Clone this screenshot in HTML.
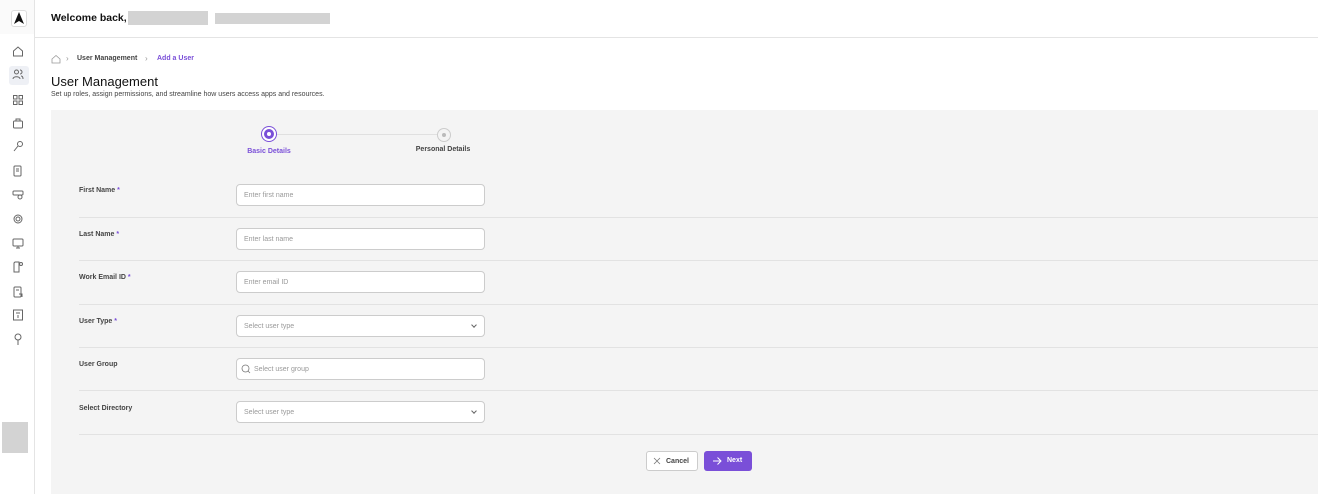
<!DOCTYPE html>
<html><head><meta charset="utf-8"><style>
*{box-sizing:border-box;margin:0;padding:0}
body{width:1318px;height:494px;overflow:hidden;background:#fff;font-family:"Liberation Sans",sans-serif;position:relative;color:#222}
.abs{position:absolute}
.sb{left:0;top:0;width:35px;height:494px;border-right:1px solid #e4e4e4;background:#fff}
.lbl{position:absolute;left:79px;font-size:7px;font-weight:bold;color:#444}
.lbl b{color:#7a4fd8}
.inp{position:absolute;left:236px;width:249px;height:22px;border:1px solid #ccc;border-radius:4px;background:#fff;font-size:7px;color:#999;padding-left:7px;padding-top:7px;line-height:8px}
.sep{position:absolute;left:79px;right:0;height:1px;background:#e2e2e2}
.chev{position:absolute;right:8px;top:7px;width:4px;height:4px;border-right:1px solid #666;border-bottom:1px solid #666;transform:rotate(45deg)}
</style></head><body>
<div class="abs sb">
 <div class="abs" style="left:0;top:0;width:34px;height:34px;background:#fafafa"></div>
 <div class="abs" style="left:11px;top:10px;width:16px;height:17px;background:#fff;border:1px solid #ddd;border-radius:3px"></div>
 <svg class="abs" style="left:14px;top:12px" width="10" height="12" viewBox="0 0 10 12"><path d="M5 0L10 12L5 9L0 12Z" fill="#111"/></svg>
 <div class="abs" style="left:9px;top:66px;width:20px;height:19px;background:#eef0f5;border-radius:3px"></div>
 <svg class="abs" style="left:12px;top:45px" width="12" height="310" viewBox="0 0 12 310" fill="none" stroke="#666" stroke-width="1">
  <path d="M1.5 6L6 2L10.5 6V11H1.5Z"/>
  <circle cx="4.5" cy="27" r="2"/><path d="M1 34c0-3 7-3 7 0M8 25a2 2 0 0 1 0 4M9 31c2 0 2 2 2 3"/>
  <rect x="1.5" y="50.5" width="3.5" height="3.5"/><rect x="7" y="50.5" width="3.5" height="3.5"/><rect x="1.5" y="56" width="3.5" height="3.5"/><rect x="7" y="56" width="3.5" height="3.5"/>
  <rect x="1.5" y="76" width="9" height="7" rx="1"/><path d="M4 76v-2h4v2"/>
  <circle cx="8" cy="99" r="2.5"/><path d="M6 101L2 106"/>
  <rect x="2" y="121" width="7" height="10" rx="1"/><path d="M4 124h3M4 126h3"/>
  <rect x="1" y="146" width="10" height="4" rx="1"/><circle cx="8" cy="152" r="2"/>
  <circle cx="6" cy="174" r="4"/><circle cx="6" cy="174" r="2"/>
  <rect x="1" y="194" width="10" height="7" rx="1"/><path d="M6 201v2M4 203h4"/>
  <path d="M3 217h4v10H2V218z"/><circle cx="9" cy="219" r="1.5"/>
  <rect x="2" y="242" width="7" height="10" rx="1"/><path d="M4 245h3M7 249h3v3"/>
  <rect x="1.5" y="265" width="9" height="10"/><path d="M4 268h4M6 270v3"/>
  <circle cx="6" cy="292" r="3"/><path d="M6 295v5"/>
 </svg>
 <div class="abs" style="left:2px;top:422px;width:26px;height:31px;background:#d3d3d3"></div>
</div>
<div class="abs" style="left:35px;top:37px;right:0;height:1px;background:#e4e4e4"></div>
<div class="abs" style="left:51px;top:12px;font-size:10.5px;font-weight:bold;color:#111">Welcome back,</div>
<div class="abs" style="left:128px;top:11px;width:80px;height:14px;background:#d3d3d3"></div>
<div class="abs" style="left:215px;top:13px;width:115px;height:11px;background:#d3d3d3"></div>
<svg class="abs" style="left:51px;top:54px" width="10" height="10" viewBox="0 0 10 10" fill="none" stroke="#999" stroke-width="0.8"><path d="M1 5L5 1.5L9 5V9H1Z"/></svg>
<div class="abs" style="left:66px;top:54px;font-size:8px;color:#999">›</div>
<div class="abs" style="left:77px;top:55px;font-size:7px;color:#444;font-weight:bold">User Management</div>
<div class="abs" style="left:145px;top:54px;font-size:8px;color:#999">›</div>
<div class="abs" style="left:157px;top:55px;font-size:7px;color:#7a4fd8;font-weight:bold">Add a User</div>
<div class="abs" style="left:51px;top:74px;font-size:13px;color:#111">User Management</div>
<div class="abs" style="left:51px;top:91px;font-size:7px;color:#444">Set up roles, assign permissions, and streamline how users access apps and resources.</div>
<div class="abs" style="left:51px;top:110px;right:0;bottom:0;background:#f4f4f4"></div>
<div class="abs" style="left:276px;top:134px;width:162px;height:1px;background:#e0e0e0"></div>
<div class="abs" style="left:262px;top:127px;width:14px;height:14px;border-radius:50%;background:#7a4fd8;border:2px solid #fff;box-shadow:0 0 0 1px #7a4fd8"></div>
<div class="abs" style="left:267px;top:132px;width:4px;height:4px;border-radius:50%;background:#fff"></div>
<div class="abs" style="left:437px;top:128px;width:14px;height:14px;border-radius:50%;border:1px solid #ccc;background:#f4f4f4"></div>
<div class="abs" style="left:442px;top:133px;width:4px;height:4px;border-radius:50%;background:#bbb"></div>
<div class="abs" style="left:229px;top:148px;width:80px;text-align:center;font-size:7px;color:#7a4fd8;font-weight:bold">Basic Details</div>
<div class="abs" style="left:403px;top:146px;width:80px;text-align:center;font-size:7px;color:#444;font-weight:bold">Personal Details</div>

<div class="lbl" style="top:187px">First Name <b>*</b></div>
<div class="inp" style="top:184px">Enter first name</div>
<div class="sep" style="top:217px"></div>
<div class="lbl" style="top:231px">Last Name <b>*</b></div>
<div class="inp" style="top:228px">Enter last name</div>
<div class="sep" style="top:260px"></div>
<div class="lbl" style="top:274px">Work Email ID <b>*</b></div>
<div class="inp" style="top:271px">Enter email ID</div>
<div class="sep" style="top:304px"></div>
<div class="lbl" style="top:318px">User Type <b>*</b></div>
<div class="inp" style="top:315px">Select user type<span class="chev"></span></div>
<div class="sep" style="top:347px"></div>
<div class="lbl" style="top:361px">User Group</div>
<div class="inp" style="top:358px;padding-left:17px">Select user group</div>
<svg class="abs" style="left:241px;top:364px" width="10" height="10" viewBox="0 0 10 10" fill="none" stroke="#777" stroke-width="0.8"><circle cx="4.5" cy="4.5" r="3.5"/><path d="M7 7L9 9"/></svg>
<div class="sep" style="top:390px"></div>
<div class="lbl" style="top:405px">Select Directory</div>
<div class="inp" style="top:401px">Select user type<span class="chev"></span></div>
<div class="sep" style="top:434px"></div>

<div class="abs" style="left:646px;top:451px;width:52px;height:20px;border:1px solid #ccc;border-radius:3px;background:#fff;font-size:7px;font-weight:bold;color:#444;padding-top:6px;line-height:8px;padding-left:19px">Cancel</div>
<svg class="abs" style="left:653px;top:457px" width="8" height="8" viewBox="0 0 8 8" stroke="#777" stroke-width="0.8"><path d="M1 1L7 7M7 1L1 7"/></svg>
<div class="abs" style="left:704px;top:451px;width:48px;height:20px;border-radius:3px;background:#7a4fd8;font-size:7px;font-weight:bold;color:#fff;padding-top:6px;line-height:8px;padding-left:23px">Next</div>
<svg class="abs" style="left:712px;top:456px" width="10" height="10" viewBox="0 0 10 10" fill="none" stroke="#fff" stroke-width="1"><path d="M1 5H9M5.5 1.5L9 5L5.5 8.5"/></svg>
</body></html>
